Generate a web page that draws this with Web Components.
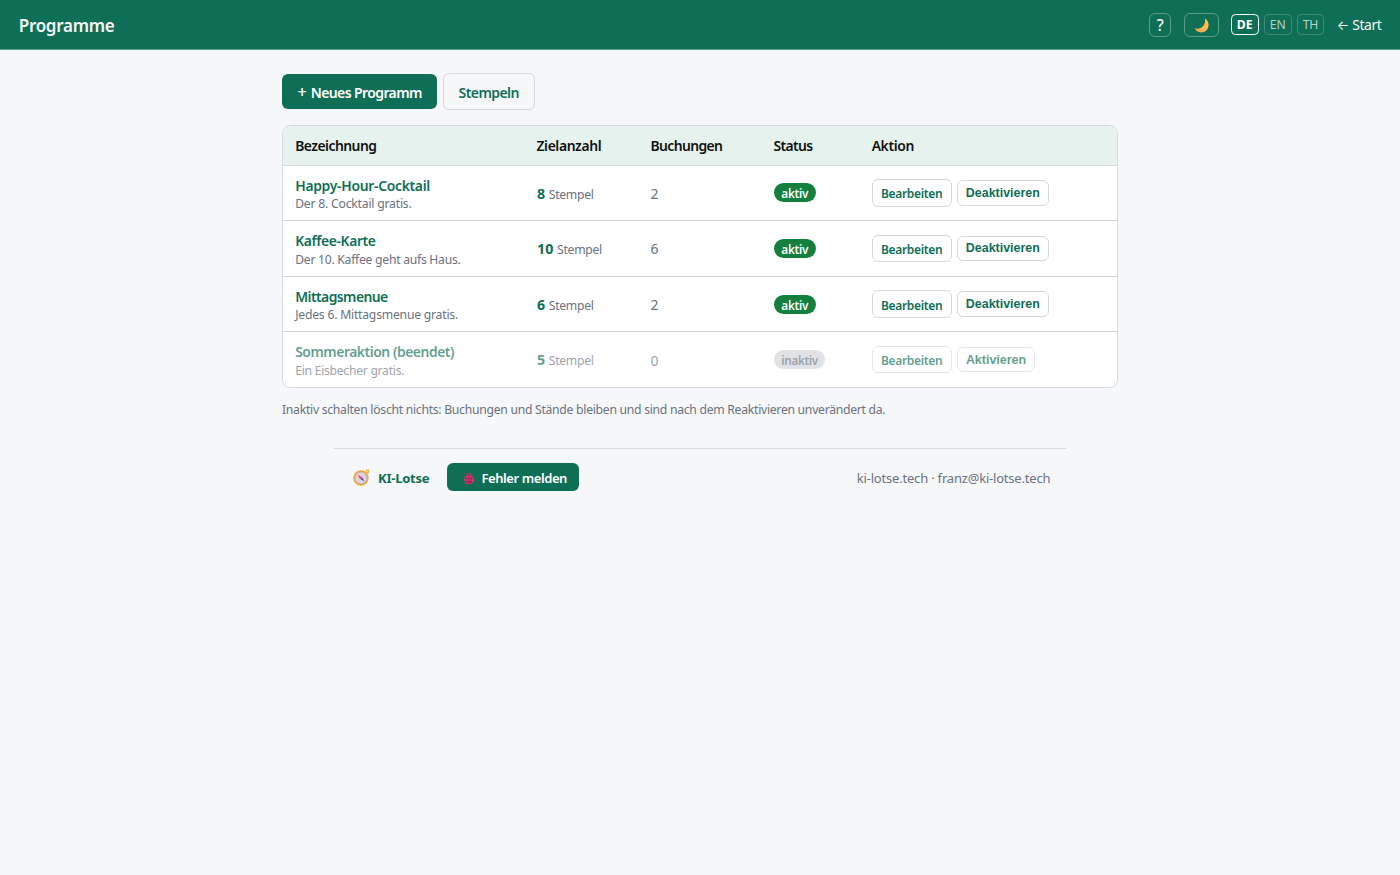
<!DOCTYPE html>
<html lang="de">
<head>
<meta charset="utf-8">
<title>Programme</title>
<style>
html{--green:#0f6e56;--line:#d5d9df;--muted:#6b7280;--bg:#f6f7f9}
body{margin:0;background:var(--bg);font-family:"Noto Sans","Open Sans",sans-serif;color:#111}
</style>
</head>
<body>
<programme-page></programme-page>
<script>
const define = (name, html, extra) => {
  const t = document.createElement('template');
  t.innerHTML = html;
  customElements.define(name, class extends HTMLElement {
    connectedCallback() {
      if (this.shadowRoot) return;
      this.attachShadow({mode: 'open'}).append(t.content.cloneNode(true));
      if (extra) extra(this);
    }
  });
};

// One line of text tracked to a given advance width.
define('fit-text', `<style>:host{display:inline-block;white-space:pre}span{display:inline-block}</style><span><slot></slot></span>`, el => {
  const s = el.shadowRoot.querySelector('span');
  const w = parseFloat(el.getAttribute('w'));
  const n = el.textContent.length;
  s.style.letterSpacing = ((w - s.getBoundingClientRect().width) / n) + 'px';
});

define('moon-icon', `<style>:host{display:block;flex:none;width:15px;height:15px}svg{display:block}</style>
<svg width="15" height="15" viewBox="0 0 15 15"><defs><linearGradient id="m" x1="1" y1="0" x2=".2" y2="1"><stop offset="0" stop-color="#fdc83f"/><stop offset=".6" stop-color="#fdbb4c"/><stop offset="1" stop-color="#f5a05a"/></linearGradient></defs>
<path d="M10.900.6C13.600 2 14.900 4.900 14.500 8.100c-.4 3.700-3.500 6.500-7.200 6.400C4.300 14.400 1.800 12.800.6 10.300c2.600.9 5.900.5 8-1.500 2.200-2.200 3.100-5.500 2.300-8.200z" fill="url(#m)"/><circle cx="12.600" cy="6.600" r=".6" fill="#f5a548"/><circle cx="9.500" cy="11.700" r=".7" fill="#f5a548"/></svg>`);

define('compass-icon', `<style>:host{display:block;flex:none;width:17px;height:17px}svg{display:block}</style>
<svg width="17" height="17" viewBox="0 0 17 17"><circle cx="14.600" cy="2.300" r="1.400" fill="none" stroke="#f3ad3d" stroke-width="1.200"/><circle cx="8" cy="9" r="6.900" fill="#ddd3e2" stroke="#eda63a" stroke-width="1.600"/><circle cx="8" cy="9" r="5.700" fill="none" stroke="#b9aec5" stroke-width=".6"/><path d="M4.700 5.800l4.200 2.100-1.900 2z" fill="#e0456f"/><path d="M11.400 12.200l-4.300-2.100 2-2z" fill="#5a5368"/></svg>`);

define('bug-icon', `<style>:host{display:block;flex:none;width:12px;height:13px}svg{display:block}</style>
<svg width="12" height="13" viewBox="0 0 12 13"><path d="M3.300.8l1 1.500M8.700.8l-1 1.500M.8 4l1.500 1.300M11.200 4L9.700 5.300M.2 8h1.600M11.800 8h-1.600M1.100 12l1.500-1.500M10.900 12l-1.500-1.500" stroke="#8a4268" stroke-width="1"/><ellipse cx="6" cy="2.900" rx="2.600" ry="1.800" fill="#7a4462"/><ellipse cx="6" cy="7.700" rx="4.700" ry="4.600" fill="#e6306f"/><path d="M6 3.200v9" stroke="#5a3350" stroke-width=".9"/><circle cx="3.600" cy="6.500" r="1.100" fill="#5a3350"/><circle cx="8.400" cy="6.500" r="1.100" fill="#5a3350"/><circle cx="4" cy="9.700" r="1" fill="#5a3350"/><circle cx="8" cy="9.700" r="1" fill="#5a3350"/></svg>`);

define('app-header', `<style>
:host{display:flex;align-items:center;height:50px;box-sizing:border-box;background:var(--green);color:#f4f8f7;padding:0 18.700px;border-bottom:1px solid #5f9f8e}
h1{margin:3px auto 0 0;font-size:17px;font-weight:600;line-height:24px}
.b{box-sizing:border-box;display:flex;align-items:center;justify-content:center;border:1px solid #5a9a89;border-radius:6px;height:24.400px;margin-top:1px}
.q{width:22.400px;font-size:15.500px;font-weight:500;margin-right:12.500px}
.m{width:35px;margin-right:11.700px;padding-top:1px}
.l{width:28px;height:21px;border-radius:4.500px;font-size:12.200px;margin-right:5px;margin-top:0;color:#b5d2ca;border-color:#43897a}
.l:nth-of-type(5){width:27.500px}
.on{border-color:#fff;color:#fff;font-weight:700}
.s{font-size:14px;line-height:20px;margin:1px 0 0 7.700px;display:flex}
.ar{font-family:Inter,sans-serif;font-size:13px}
</style>
<h1><fit-text w="95.800">Programme</fit-text></h1>
<div class="b q">?</div><div class="b m"><moon-icon></moon-icon></div>
<div class="b l on"><fit-text w="15.800">DE</fit-text></div><div class="b l"><fit-text w="15.600">EN</fit-text></div><div class="b l"><fit-text w="15.500">TH</fit-text></div>
<div class="s"><fit-text class="ar" w="15.500">← </fit-text><fit-text w="29">Start</fit-text></div>`);

define('ui-button', `<style>
:host{display:inline-flex;box-sizing:border-box;align-items:center;justify-content:center;border-radius:6px;font-weight:600;color:var(--green);border:1px solid var(--line);font-size:14px;white-space:nowrap}
:host([primary]){background:var(--green);color:#fff;border:0}
:host([small]){font-size:12px;height:27.500px;width:80px;padding-top:2px}
:host([toggle]){font:bold 12.440px "Liberation Sans",Arial,sans-serif;height:25.500px}
</style><slot></slot>`);

define('status-pill', `<style>
:host{display:inline-flex;box-sizing:border-box;align-items:center;height:19px;padding:1px 7.600px 0;border-radius:10px;background:#15803d;color:#fff;font-size:11.700px;font-weight:600}
:host([off]){background:#d0d4da;color:#6b7280}
</style><slot></slot>`);

define('programme-row', `<style>
:host{display:grid;grid-template-columns:241.300px 114px 122.900px 98.300px 1fr;align-items:center;height:55.600px;box-sizing:border-box;padding-left:12.200px;border-top:1px solid var(--line);background:#fff;font-size:13.900px;color:var(--muted)}
:host([head]){height:38.300px;border-top:0;background:#e6f2ed;color:#111;font-weight:600}
.off{opacity:.65}
.name{padding-top:4px;line-height:18px}
.t{color:var(--green);font-weight:600;display:block}
.d{font-size:12.200px;display:block;margin-top:.4px}
.n{display:flex;align-items:baseline;font-size:12.200px;padding:.6px 0 0 .4px}
.c{padding-top:1px}
b{font-size:14.200px;color:var(--green)}
.a{display:flex;gap:5px;align-items:center}
</style><div style="display:contents" class="r"></div>`, el => {
  const r = el.shadowRoot.querySelector('.r');
  const d = JSON.parse(el.getAttribute('data'));
  const f = ([t, w], c = '') => `<fit-text class="${c}" w="${w}">${t}</fit-text>`;
  if (el.hasAttribute('head')) { r.innerHTML = d.map(x => `<div>${f(x)}</div>`).join(''); return; }
  const o = d.off ? 'off' : '';
  r.innerHTML = `<div class="name ${o}">${f(d.t, 't')}${f(d.d, 'd')}</div>
<div class="n ${o}"><b>${f(d.n)}</b><fit-text w="44.800" style="margin-left:3.400px">Stempel</fit-text></div>
<div class="c ${o}">${d.b}</div>
<div class="${o}" style="display:flex;padding-left:.4px"><status-pill ${d.off ? 'off' : ''}>${f(d.off ? ['inaktiv', 36.400] : ['aktiv', 26.700])}</status-pill></div>
<div class="a ${o}"><ui-button small><fit-text w="61.300">Bearbeiten</fit-text></ui-button><ui-button toggle style="width:${d.off ? 78.600 : 92.300}px">${f(d.off ? ['Aktivieren', 60.200] : ['Deaktivieren', 74])}</ui-button></div>`;
});

define('programme-table', `<style>:host{display:block;box-sizing:border-box;border:1px solid var(--line);border-radius:9px;overflow:hidden;background:#fff}</style>
<programme-row head data='[["Bezeichnung",81.200],["Zielanzahl",64.700],["Buchungen",71.800],["Status",39.200],["Aktion",42.200]]'></programme-row>
<programme-row data='{"t":["Happy-Hour-Cocktail",134.800],"d":["Der 8. Cocktail gratis.",116.300],"n":["8",8.500],"b":2}'></programme-row>
<programme-row data='{"t":["Kaffee-Karte",80.300],"d":["Der 10. Kaffee geht aufs Haus.",165.300],"n":["10",16.800],"b":6}'></programme-row>
<programme-row data='{"t":["Mittagsmenue",92.500],"d":["Jedes 6. Mittagsmenue gratis.",162.800],"n":["6",8.500],"b":2}'></programme-row>
<programme-row data='{"off":1,"t":["Sommeraktion (beendet)",158.900],"d":["Ein Eisbecher gratis.",109],"n":["5",8.500],"b":0}'></programme-row>`);

define('app-footer', `<style>
:host{display:flex;align-items:center;box-sizing:border-box;width:731.600px;margin:29.400px auto 0;border-top:1px solid var(--line);padding:13px 15.500px 0 18.600px;height:43.500px;font-size:13px;color:var(--muted)}
compass-icon{margin-top:1px}
.k{color:var(--green);font-weight:700;margin:2px 17.400px 0 8.200px}
ui-button{width:132.600px;height:28.500px;font-size:13px}
bug-icon{margin:3px 6.500px 0 4px}
.r{margin:2px 0 0 auto}
</style><compass-icon></compass-icon><div class="k"><fit-text w="51.300">KI-Lotse</fit-text></div>
<ui-button primary><bug-icon></bug-icon><fit-text w="85.500" style="padding-top:2.400px">Fehler melden</fit-text></ui-button>
<div class="r"><fit-text w="193.500">ki-lotse.tech · franz@ki-lotse.tech</fit-text></div>`);

define('programme-page', `<style>
:host{display:block}
main{width:836px;margin:0 auto;padding-top:22.700px}
.bar{display:flex;align-items:center;gap:5.300px;height:37px;margin-bottom:15.600px}
p{margin:13px 0 0;font-size:12.200px;line-height:18px;color:var(--muted)}
.plus{font-family:"Open Sans",sans-serif;font-size:16px;line-height:16px}
</style><app-header></app-header><main>
<div class="bar"><ui-button primary style="width:155.400px;height:35px"><span style="padding-top:2px"><fit-text class="plus" w="13.200">+ </fit-text><fit-text w="111.200">Neues Programm</fit-text></span></ui-button><ui-button style="width:92px;height:37px;padding-top:2px"><fit-text w="60.200">Stempeln</fit-text></ui-button></div>
<programme-table></programme-table>
<p><fit-text w="603.300">Inaktiv schalten löscht nichts: Buchungen und Stände bleiben und sind nach dem Reaktivieren unverändert da.</fit-text></p>
</main><app-footer></app-footer>`);
</script>
</body>
</html>
